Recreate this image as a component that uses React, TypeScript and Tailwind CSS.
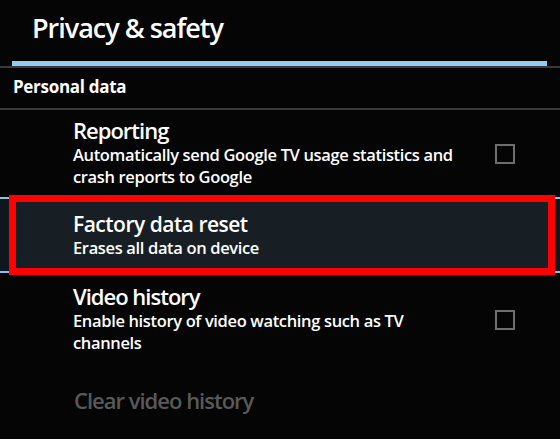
import React from "react";

function Checkbox() {
  return <div className="w-[20px] h-[20px] border-2 border-[#6e6e6e] shrink-0" />;
}

export default function App() {
  return (
    <div
      className="w-[560px] h-[439px] bg-[#050505] overflow-hidden text-white"
      style={{ fontFamily: '"Open Sans", "Noto Sans", sans-serif' }}
    >
      <div className="h-[61px] pl-[32px] pt-[8px]">
        <div className="text-[27px] leading-[40px] tracking-[-1px] font-semibold">Privacy &amp; safety</div>
      </div>
      <div className="border-b-2 border-[#3a3a3a]">
        <div className="ml-[12px] w-[535px] h-[5px] bg-[#8fcdf2]" />
      </div>
      <div className="h-[42px] pl-[13px] pt-[7px] border-b-2 border-[#3a3a3a]">
        <div className="text-[17px] font-bold leading-[24px] tracking-[-0.3px]">Personal data</div>
      </div>
      <div className="h-[87px] flex items-center pl-[73px] pr-[45px]">
        <div className="flex-1 -mt-[3px]">
          <div className="text-[22px] leading-[28px] tracking-[-1px] font-semibold">Reporting</div>
          <div className="text-[16.5px] leading-[22px] tracking-[-0.35px] font-semibold">
            Automatically send Google TV usage statistics and
            <br />
            crash reports to Google
          </div>
        </div>
        <Checkbox />
      </div>
      <div className="h-[76px] border-y-2 border-[#8fbfe0] bg-[#0f171e] flex">
        <div className="flex-1 ml-[9px] mr-[5px] -my-[4px] border-[7px] border-[#ff0000] bg-[#171f25] pl-[57px] pt-[9px]">
          <div className="text-[21px] leading-[26px] tracking-[-0.5px] font-semibold">Factory data reset</div>
          <div className="text-[16.5px] leading-[22px] tracking-[-0.35px] font-semibold">Erases all data on device</div>
        </div>
      </div>
      <div className="h-[94px] flex items-center pl-[73px] pr-[45px]">
        <div className="flex-1 -mt-[5px]">
          <div className="text-[22px] leading-[28px] tracking-[-1px] font-semibold">Video history</div>
          <div className="text-[16.5px] leading-[22px] tracking-[-0.35px] font-semibold">
            Enable history of video watching such as TV
            <br />
            channels
          </div>
        </div>
        <Checkbox />
      </div>
      <div className="pl-[74px] pt-[19px]">
        <div className="text-[22px] leading-[28px] tracking-[-1px] font-semibold text-[#595959]">Clear video history</div>
      </div>
    </div>
  );
}
